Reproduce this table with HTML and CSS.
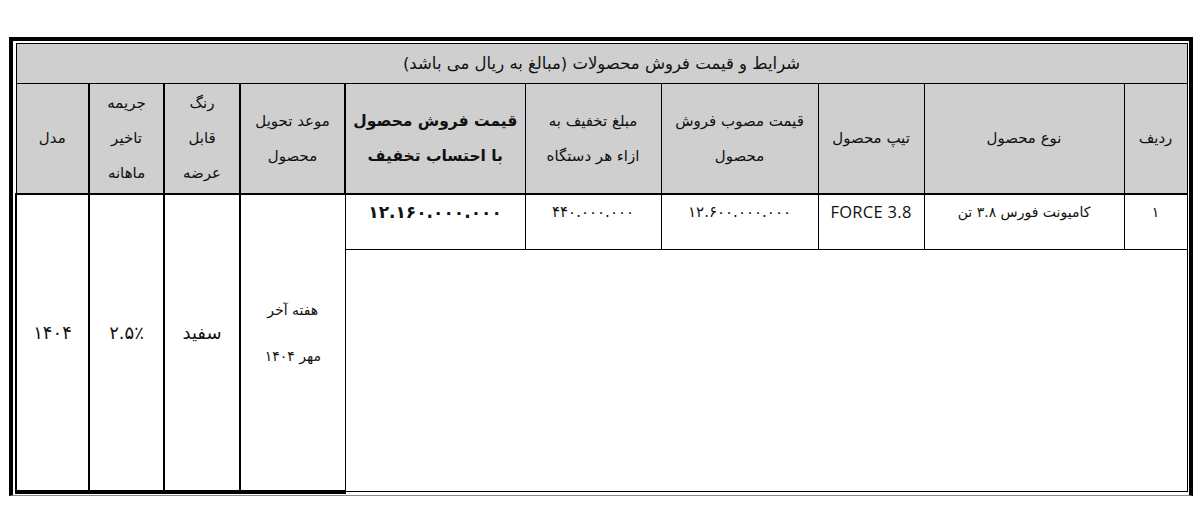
FILE: index.html
```html
<!DOCTYPE html>
<html lang="fa">
<head>
<meta charset="utf-8">
<title>شرایط و قیمت فروش محصولات</title>
<link rel="stylesheet" href="styles.css">
</head>
<body>
<div class="frame">
  <table class="grid" dir="rtl">
    <colgroup>
      <col class="c-row">
      <col class="c-kind">
      <col class="c-type">
      <col class="c-price">
      <col class="c-disc">
      <col class="c-final">
      <col class="c-date">
      <col class="c-color">
      <col class="c-fine">
      <col class="c-model">
    </colgroup>
    <tr>
      <td colspan="10" class="title">شرایط و قیمت فروش محصولات (مبالغ به ریال می باشد)</td>
    </tr>
    <tr class="head">
      <th>ردیف</th>
      <th>نوع محصول</th>
      <th>تیپ محصول</th>
      <th>قیمت مصوب فروش<br>محصول</th>
      <th>مبلغ تخفیف به<br>ازاء هر دستگاه</th>
      <th class="strong">قیمت فروش محصول<br>با احتساب تخفیف</th>
      <th class="thick">موعد تحویل<br>محصول</th>
      <th class="thick">رنگ<br>قابل<br>عرضه</th>
      <th class="thick">جریمه<br>تاخیر<br>ماهانه</th>
      <th>مدل</th>
    </tr>
    <tr class="data">
      <td>۱</td>
      <td>کامیونت فورس ۳.۸ تن</td>
      <td class="latin">FORCE 3.8</td>
      <td class="num">۱۲.۶۰۰.۰۰۰.۰۰۰</td>
      <td class="num">۴۴۰.۰۰۰.۰۰۰</td>
      <td class="num big">۱۲.۱۶۰.۰۰۰.۰۰۰</td>
      <td rowspan="2" class="span date">هفته آخر<br>مهر ۱۴۰۴</td>
      <td rowspan="2" class="span color">سفید</td>
      <td rowspan="2" class="span">۲.۵٪</td>
      <td rowspan="2" class="span">۱۴۰۴</td>
    </tr>
    <tr>
      <td colspan="6" class="blank"></td>
    </tr>
  </table>
</div>
</body>
</html>
```
FILE: styles.css
```css
html, body {
  margin: 0;
  padding: 0;
  background: #ffffff;
}

body {
  font-family: "DejaVu Sans", "Noto Sans", sans-serif;
  color: #111111;
}

.frame {
  width: 1172px;
  margin: 37px 0 0 9px;
  border: 4px solid #000000;
  border-bottom: 1px solid #8a8a8a;
  padding: 2px 2px 1px 2px;
}

.grid {
  width: 1172px;
  table-layout: fixed;
  border-collapse: collapse;
  border: 1px solid #000000;
}

.c-row { width: 63px; }
.c-kind { width: 200px; }
.c-type { width: 106px; }
.c-price { width: 157px; }
.c-disc { width: 136px; }
.c-final { width: 180px; }
.c-date { width: 105px; }
.c-color { width: 76px; }
.c-fine { width: 75px; }
.c-model { width: 73px; }

.grid td,
.grid th {
  border: 1px solid #000000;
  padding: 0;
  text-align: center;
}

.title {
  background: #cfcfcf;
  height: 39px;
  font-size: 16.5px;
  line-height: 20px;
  padding-bottom: 2px;
}

.head th {
  background: #cfcfcf;
  height: 109px;
  font-size: 15px;
  font-weight: normal;
  line-height: 35px;
  vertical-align: middle;
  border-bottom: 2px solid #000000;
}

.head th.strong {
  font-weight: bold;
  font-size: 15.5px;
}

.head th.thick,
.span {
  border-left-width: 2px;
  border-right-width: 2px;
}

.data td {
  height: 49px;
  vertical-align: top;
  padding-top: 5px;
  font-size: 14px;
  line-height: 24px;
}

.data td.latin {
  font-family: "Open Sans", "Liberation Sans", sans-serif;
  font-size: 16.5px;
  letter-spacing: 0.3px;
}

.data td.num {
  letter-spacing: 2.5px;
  font-size: 15px;
}

.data td.big {
  font-weight: bold;
  font-size: 17px;
  letter-spacing: 0.5px;
}

.data td.span {
  vertical-align: middle;
  padding-top: 0;
  padding-bottom: 18px;
  font-size: 18px;
  line-height: 24px;
  border-bottom: 4px solid #000000;
  border-left: 2px solid #000000;
}

.data td.date {
  font-size: 14px;
  line-height: 46px;
}

.data td.color {
  font-size: 18px;
}

.blank {
  height: 241px;
  border-top: 1px solid #444444;
}
```
